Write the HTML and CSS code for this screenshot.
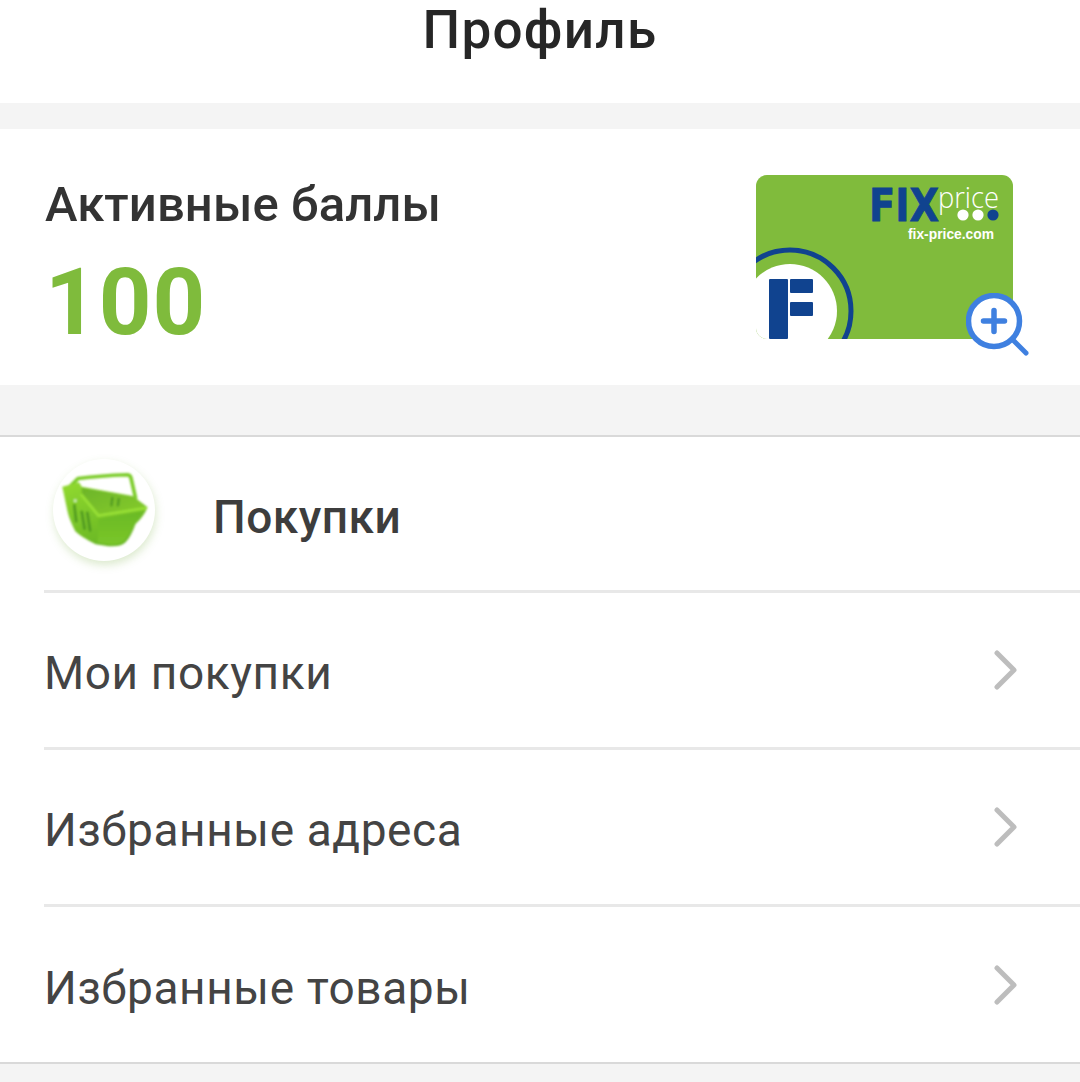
FILE: index.html
```html
<!DOCTYPE html>
<html lang="ru">
<head>
  <meta charset="UTF-8">
  <title>Профиль</title>
  <meta name="viewport" content="width=device-width, initial-scale=1.0">
  <link rel="stylesheet" href="styles.css">
</head>
<body>
  <header class="page-header">Профиль</header>

  <section class="points-card">
    <div class="points-info">
      <div class="points-label">Активные баллы</div>
      <div class="points-value">100</div>
    </div>
    <div class="loyalty-card">
      <svg class="card-art" width="257" height="164" viewBox="0 0 257 164" aria-label="Fix Price">
        <rect width="257" height="164" rx="11" fill="#80bb3c"/>
        <clipPath id="cardClip"><rect width="257" height="164" rx="11"/></clipPath>
        <g clip-path="url(#cardClip)">
          <circle cx="34" cy="136" r="61" fill="none" stroke="#10438f" stroke-width="5"/>
          <circle cx="34" cy="136" r="47" fill="#fff"/>
          <rect x="13" y="104" width="19" height="60" rx="1" fill="#10438f"/>
          <rect x="34" y="104" width="23" height="14" rx="1" fill="#10438f"/>
          <rect x="34" y="127" width="23" height="14" rx="1" fill="#10438f"/>
        </g>
        <text class="logo-fix" x="113" y="46" textLength="70" lengthAdjust="spacingAndGlyphs">FIX</text>
        <text class="logo-price" x="182" y="33" textLength="61" lengthAdjust="spacingAndGlyphs">price</text>
        <circle cx="207" cy="40" r="5.6" fill="#fff"/>
        <circle cx="222" cy="40" r="5.6" fill="#fff"/>
        <circle cx="237" cy="40" r="5.6" fill="#10438f"/>
        <text class="logo-site" x="152" y="64" textLength="86" lengthAdjust="spacingAndGlyphs">fix-price.com</text>
      </svg>
      <svg class="zoom-icon" width="66" height="66" viewBox="0 0 66 66" fill="none" stroke="#3f80e0" stroke-linecap="round">
        <circle cx="28" cy="28" r="25.5" fill="#fff" stroke-width="5.5"/>
        <path d="M46 46 L60 60" stroke-width="5"/>
        <path d="M17.5 28 H38.5 M28 17.5 V38.5" stroke-width="5.5"/>
      </svg>
    </div>
  </section>

  <section class="menu">
    <div class="menu-title-row">
      <div class="basket-badge">
        <svg width="110" height="110" viewBox="0 0 110 110">
          <defs>
            <linearGradient id="basketBody" x1="0" y1="0" x2="0.5" y2="1">
              <stop offset="0" stop-color="#92da30"/>
              <stop offset="1" stop-color="#68b624"/>
            </linearGradient>
            <linearGradient id="basketInner" x1="0" y1="0" x2="1" y2="1">
              <stop offset="0" stop-color="#6cb428"/>
              <stop offset="1" stop-color="#86cc2d"/>
            </linearGradient>
            <linearGradient id="basketFront" x1="0" y1="0" x2="0" y2="1">
              <stop offset="0" stop-color="#6aba24"/>
              <stop offset="1" stop-color="#7ac62a"/>
            </linearGradient>
            <filter id="soft" x="-10%" y="-10%" width="120%" height="120%"><feGaussianBlur stdDeviation="1"/></filter>
          </defs>
          <g filter="url(#soft)" fill="none" stroke-linejoin="round" stroke-linecap="round">
            <path d="M18 30 L27 21 Q50 18 80 17 Q83 17 84 20 L89 42" stroke="#7ccc2a" stroke-width="4"/>
            <path d="M10 30 L28 25 L31 30 L86 40 L102 52 Q98 62 89 70 Q84 84 78 90 Q72 95 60 94 L46 92 Q30 84 24 78 Q18 66 16 58 Z" fill="url(#basketBody)"/>
            <path d="M31 31 L86 41 L99 52 L49 60 L31 40 Z" fill="url(#basketInner)"/>
            <path d="M31 39 L49 61 L100 53" stroke="#98e035" stroke-width="3"/>
            <path d="M49 65 L97 57 Q92 66 87 71 Q82 84 76 89 Q70 93 60 92 L48 90 Z" fill="url(#basketFront)"/>
            <path d="M23 50 L25 67 M31 57 L34 75 M37 58 L40 77" stroke="#4f9a20" stroke-width="3"/>
            <path d="M64 42 L63 50 M71 43 L70 50" stroke="#4f9a20" stroke-width="2.5"/>
            <circle cx="24" cy="45" r="1.6" fill="#d8f0c0"/>
          </g>
        </svg>
      </div>
      <span class="menu-title">Покупки</span>
    </div>
    <div class="menu-row">
      <span>Мои покупки</span>
      <svg class="chevron" width="26" height="40" viewBox="0 0 26 40"><path d="M4 3 L21 20 L4 37"/></svg>
    </div>
    <div class="menu-row">
      <span>Избранные адреса</span>
      <svg class="chevron" width="26" height="40" viewBox="0 0 26 40"><path d="M4 3 L21 20 L4 37"/></svg>
    </div>
    <div class="menu-row">
      <span>Избранные товары</span>
      <svg class="chevron" width="26" height="40" viewBox="0 0 26 40"><path d="M4 3 L21 20 L4 37"/></svg>
    </div>
  </section>
</body>
</html>
```

FILE: styles.css
```css
html, body {
  height: 100%;
}
body {
  margin: 0;
  background: #f4f4f4;
  font-family: Roboto, "Noto Sans", sans-serif;
  overflow: hidden;
}
.page-header {
  height: 103px;
  background: #fff;
  color: #262626;
  font-size: 53px;
  font-weight: 500;
  line-height: 60px;
  letter-spacing: 1.3px;
  text-align: center;
}
.points-card {
  display: flex;
  justify-content: space-between;
  height: 256px;
  margin-top: 26px;
  padding: 46px 67px 0 45px;
  box-sizing: border-box;
  background: #fff;
}
.points-label {
  color: #333;
  font-size: 49px;
  font-weight: 500;
  line-height: 60px;
  letter-spacing: 0.1px;
}
.points-value {
  margin-top: 14px;
  color: #7fbb3c;
  font-size: 92px;
  font-weight: 700;
  line-height: 108px;
  letter-spacing: 1px;
}
.loyalty-card {
  position: relative;
  width: 257px;
  height: 164px;
}
.card-art {
  display: block;
}
.logo-fix {
  fill: #10438f;
  stroke: #10438f;
  stroke-width: 0.8;
  font-family: "DejaVu Sans", sans-serif;
  font-size: 44px;
  font-weight: 700;
}
.logo-price {
  fill: #fff;
  font-family: "Open Sans", sans-serif;
  font-size: 29px;
  font-weight: 300;
}
.logo-site {
  fill: #fff;
  font-family: "Liberation Sans", sans-serif;
  font-size: 15px;
  font-weight: 700;
}
.zoom-icon {
  position: absolute;
  left: 210px;
  top: 118px;
}
.menu {
  margin-top: 50px;
  padding-left: 44px;
  background: #fff;
  border-top: 2px solid #d9d9d9;
  border-bottom: 2px solid #d9d9d9;
}
.menu-title-row {
  display: flex;
  align-items: center;
  height: 153px;
  color: #3d3d3d;
  font-size: 46px;
  font-weight: 500;
  letter-spacing: 0.5px;
}
.menu-title {
  padding-top: 6px;
}
.basket-badge {
  display: flex;
  flex: none;
  width: 102px;
  height: 102px;
  margin: -8px 58px 0 9px;
  align-items: center;
  justify-content: center;
  border-radius: 50%;
  background: #fff;
  box-shadow: 1px 4px 9px rgba(130, 180, 80, 0.28);
}
.menu-row {
  display: flex;
  align-items: center;
  justify-content: space-between;
  height: 154px;
  padding-right: 61px;
  border-top: 3px solid #e8e8e8;
  color: #444;
  font-size: 46px;
  letter-spacing: 0.6px;
}
.menu-row span {
  padding-top: 6px;
}
.chevron {
  fill: none;
  stroke: #bdbdbd;
  stroke-width: 5;
  stroke-linecap: round;
  stroke-linejoin: round;
}
.menu-row:last-child {
  height: 155px;
}
```
